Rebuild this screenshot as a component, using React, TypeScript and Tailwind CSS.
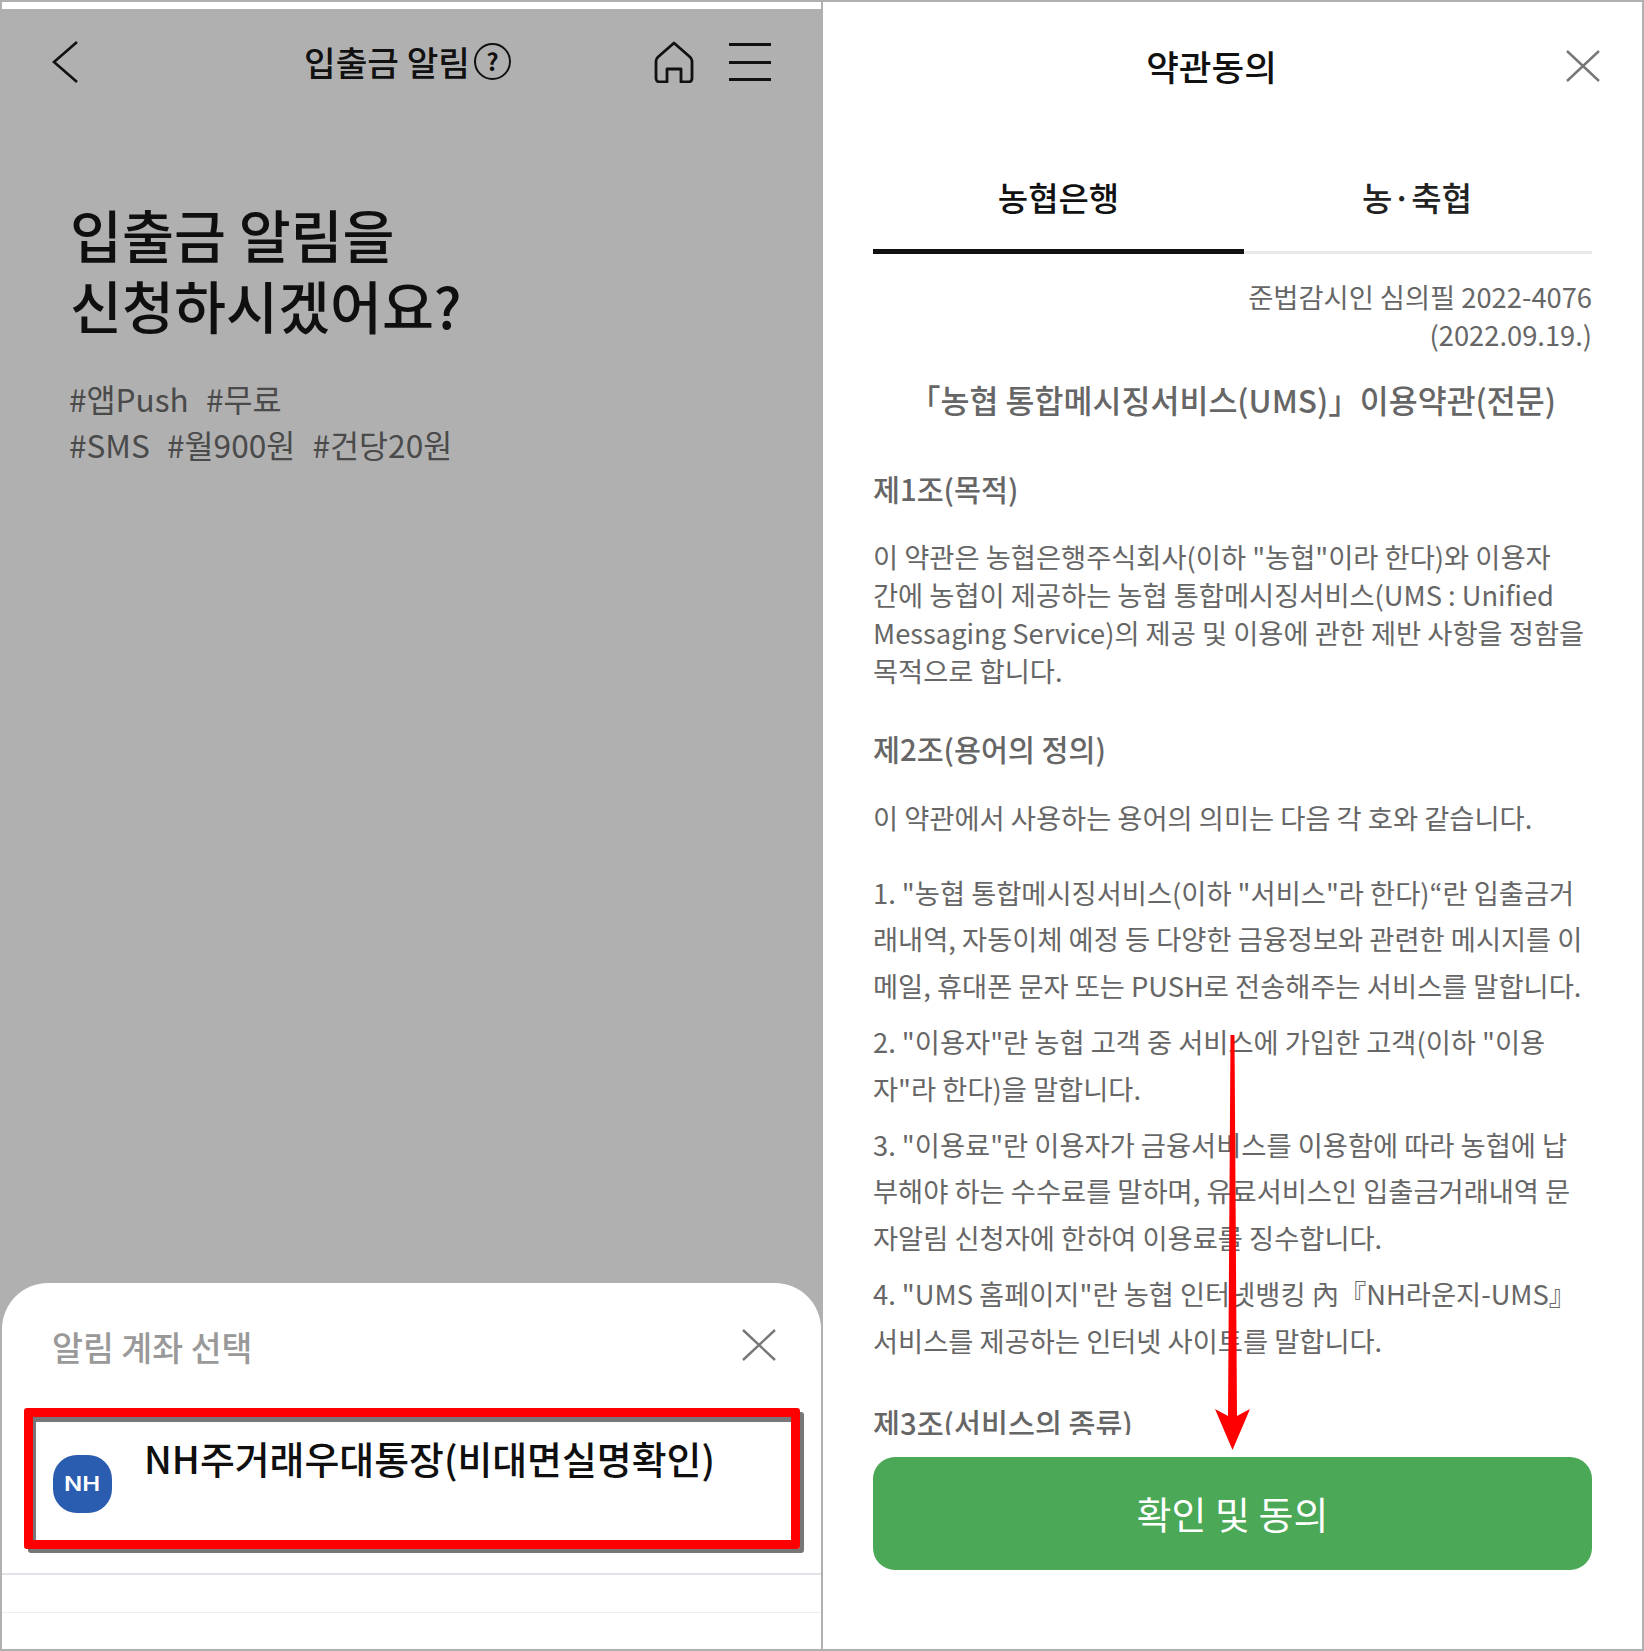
import React from "react";

const font = { fontFamily: '"Noto Sans CJK KR", "Noto Sans", sans-serif' };

function CloseIcon({ className }: { className: string }) {
  return (
    <svg viewBox="0 0 34 32" className={className} fill="none" stroke="#777777" strokeWidth="2.4">
      <path d="M1 1L33 31M33 1L1 31" />
    </svg>
  );
}

function LeftPanel() {
  return (
    <div className="flex flex-col min-w-0 min-h-0 border-r-2 border-[#b0b0b0]">
      <div className="h-[7px] bg-white shrink-0" />
      <div className="flex-1 flex flex-col bg-[#b0b0b0] min-h-0">
        <div className="h-[74px] mt-[16px] relative flex items-center justify-between pl-[50px] pr-[50px] shrink-0">
          <svg viewBox="0 0 26 42" className="w-[26px] h-[42px]" fill="none" stroke="#111111" strokeWidth="2.6">
            <path d="M25 1L2 21L25 41" />
          </svg>
          <div className="absolute left-[302px] top-0 flex items-center gap-[4px]">
            <span className="text-[34.4px] leading-[72px] font-medium text-[#111111]">입출금 알림</span>
            <span className="w-[37px] h-[37px] rounded-full border-2 border-[#111111] flex items-center justify-center text-[24px] leading-none font-bold text-[#111111]">?</span>
          </div>
          <div className="flex items-center gap-[35px]">
            <svg viewBox="0 0 40 42" className="w-[40px] h-[42px]" fill="none" stroke="#111111" strokeWidth="2.8" strokeLinejoin="round">
              <path d="M20 2L36 16Q38 18 38 20V37Q38 41 34 41H27V28H13V41H6Q2 41 2 37V20Q2 18 4 16Z" />
            </svg>
            <div className="w-[42px] h-[38px] flex flex-col justify-between">
              <div className="h-[3px] bg-[#111111]" />
              <div className="h-[3px] bg-[#111111]" />
              <div className="h-[3px] bg-[#111111]" />
            </div>
          </div>
        </div>
        <div className="pl-[68px] pt-[99px] text-[56.5px] leading-[71px] font-medium text-[#0f0f0f] whitespace-nowrap">
          <p>입출금 알림을</p>
          <p>신청하시겠어요?</p>
        </div>
        <div className="pl-[67px] pt-[35px] text-[31.6px] leading-[46px] text-[#4a4a4a] whitespace-pre [word-spacing:1.5px]">
          <p>{"#앱Push  #무료"}</p>
          <p>{"#SMS  #월900원  #건당20원"}</p>
        </div>
        <div className="flex-1" />
        <div className="h-[366px] bg-white rounded-t-[46px] flex flex-col shrink-0">
          <div className="h-[125px] pl-[50px] pr-[45px] flex items-start justify-between pt-[39px] shrink-0">
            <span className="text-[33.6px] leading-[50px] font-medium text-[#999999]">알림 계좌 선택</span>
            <CloseIcon className="w-[34px] h-[32px] mt-[7px]" />
          </div>
          <div className="ml-[22px] mr-[21px] h-[141px] border-[9px] border-[#ff0000] rounded-[3px] shadow-[4px_4px_0_#777777] shrink-0">
            <div className="h-full border-l-[3px] border-t-[5px] border-[#777777] bg-white flex items-start pl-[17px]">
              <div className="w-[59px] h-[58px] mt-[33px] bg-[#2a5db0] rounded-[24px] flex items-center justify-center text-white shrink-0">
                <span className="text-[20px] leading-none font-semibold scale-x-[1.2]" style={{ fontFamily: "Inter, sans-serif" }}>NH</span>
              </div>
              <span className="ml-[32px] text-[37.9px] leading-[44px] font-medium text-[#0f0f0f] whitespace-nowrap mt-[14px]">NH주거래우대통장(비대면실명확인)</span>
            </div>
          </div>
          <div className="mt-[24px] h-[2px] bg-[#e2e2e8] shrink-0" />
          <div className="mt-[37px] h-px bg-[#eeeeee] shrink-0" />
        </div>
      </div>
    </div>
  );
}

function RightPanel() {
  return (
    <div className="relative flex flex-col min-w-0 min-h-0 bg-white px-[50px]">
      <div className="relative h-[128px] pt-[38px] pr-[42px] text-center text-[35.5px] leading-[52px] font-medium text-[#111111] shrink-0">
        약관동의
        <CloseIcon className="absolute right-[-8px] top-[48px] w-[34px] h-[32px]" />
      </div>
      <div className="flex h-[124px] shrink-0">
        <div className="w-[371px] h-full border-b-[5px] border-[#111111] text-center pt-[45px] text-[33px] leading-[44px] font-medium text-[#111111]">농협은행</div>
        <div className="flex-1 h-full border-b-[3px] border-[#e8e8e8] text-center pt-[45px] pr-[2px] text-[33px] leading-[44px] font-medium text-[#222222]">농·축협</div>
      </div>
      <div className="flex-1 min-h-0 overflow-hidden text-[27.3px] text-[#666666] whitespace-nowrap">
        <div className="text-right leading-[38px] mt-[23px]">
          <p>준법감시인 심의필 2022-4076</p>
          <p>(2022.09.19.)</p>
        </div>
        <p className="mt-[23px] text-center text-[31.5px] leading-[46px] font-medium">「농협 통합메시징서비스(UMS)」이용약관(전문)</p>
        <p className="mt-[44px] text-[29.3px] leading-[44px] font-medium">제1조(목적)</p>
        <div className="mt-[27px] leading-[38px]">
          <p>이 약관은 농협은행주식회사(이하 "농협"이라 한다)와 이용자</p>
          <p>간에 농협이 제공하는 농협 통합메시징서비스(UMS : Unified</p>
          <p>Messaging Service)의 제공 및 이용에 관한 제반 사항을 정함을</p>
          <p>목적으로 합니다.</p>
        </div>
        <p className="mt-[37px] text-[29.3px] leading-[44px] font-medium">제2조(용어의 정의)</p>
        <p className="mt-[28px] leading-[38px]">이 약관에서 사용하는 용어의 의미는 다음 각 호와 같습니다.</p>
        <div className="mt-[33px] leading-[46.4px] flex flex-col gap-[10px]">
          <div>
            <p>1. "농협 통합메시징서비스(이하 "서비스"라 한다)“란 입출금거</p>
            <p>래내역, 자동이체 예정 등 다양한 금융정보와 관련한 메시지를 이</p>
            <p>메일, 휴대폰 문자 또는 PUSH로 전송해주는 서비스를 말합니다.</p>
          </div>
          <div>
            <p>2. "이용자"란 농협 고객 중 서비스에 가입한 고객(이하 "이용</p>
            <p>자"라 한다)을 말합니다.</p>
          </div>
          <div>
            <p>3. "이용료"란 이용자가 금융서비스를 이용함에 따라 농협에 납</p>
            <p>부해야 하는 수수료를 말하며, 유료서비스인 입출금거래내역 문</p>
            <p>자알림 신청자에 한하여 이용료를 징수합니다.</p>
          </div>
          <div>
            <p>4. "UMS 홈페이지"란 농협 인터넷뱅킹 內『NH라운지-UMS』</p>
            <p>서비스를 제공하는 인터넷 사이트를 말합니다.</p>
          </div>
        </div>
        <p className="mt-[37px] text-[29.3px] leading-[44px] font-medium">제3조(서비스의 종류)</p>
      </div>
      <div className="mt-[22px] mb-[79px] h-[113px] pb-[3px] rounded-[22px] bg-[#4aa856] flex items-center justify-center text-white text-[38px] shrink-0">확인 및 동의</div>
      <svg viewBox="0 0 36 416" className="absolute left-[392px] top-[1033px] w-[36px] h-[416px]">
        <path d="M15.5 0H19.5L22 381L35 374L17.5 415L0 374L13 381Z" fill="#ff0000" />
      </svg>
    </div>
  );
}

export default function App() {
  return (
    <div className="w-[1644px] h-[1651px] border-2 border-[#b0b0b0] bg-white grid grid-cols-[821px_1fr] grid-rows-[minmax(0,1fr)] overflow-hidden" style={font}>
      <LeftPanel />
      <RightPanel />
    </div>
  );
}
